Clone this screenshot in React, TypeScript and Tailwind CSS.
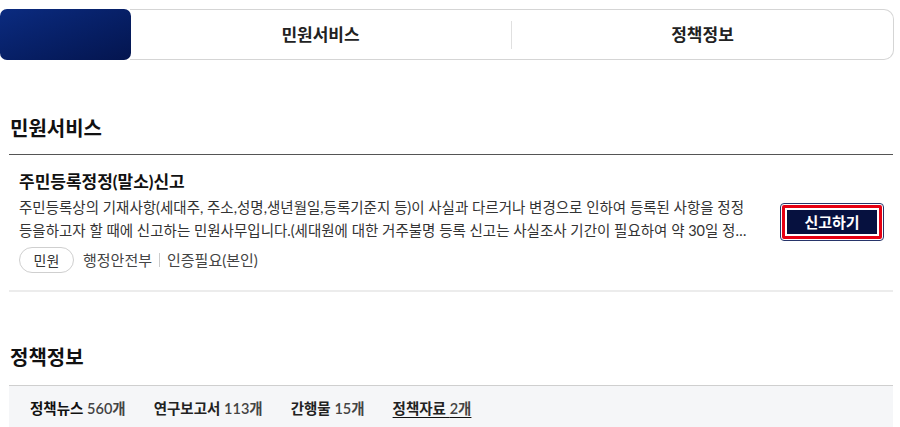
export default function App() {
  const counts = [
    { label: "정책뉴스", count: "560개", active: true },
    { label: "연구보고서", count: "113개" },
    { label: "간행물", count: "15개" },
    { label: "정책자료", count: "2개", underline: true },
  ];

  return (
    <div className="min-h-[427px] bg-white font-['Lato','Noto_Sans_CJK_KR',sans-serif] text-[#111]">
      {/* Tab bar */}
      <div className="pt-[9px] w-[894px] flex">
        <div className="w-[131px] h-[51px] rounded-[7px] bg-gradient-to-br from-[#0b2b80] to-[#04154f]" />
        <div className="flex-1 flex items-center h-[51px] border-y border-r border-[#d5d5d5] rounded-r-[10px] -ml-[1px]">
          <button className="flex-1 text-center text-[17px] font-bold text-[#222]">민원서비스</button>
          <span className="w-px h-[28px] bg-[#e0e0e0]" />
          <button className="flex-1 text-center text-[17px] font-bold text-[#222]">정책정보</button>
        </div>
      </div>

      <div className="ml-[9px] w-[884px]">
        {/* 민원서비스 */}
        <h2 className="mt-[54px] text-[20px] font-bold leading-[28px] pl-px">민원서비스</h2>
        <div className="mt-[12px] border-t border-[#555]">
          <div className="flex items-center border-b-2 border-[#ececec] pl-[10px] pr-[9px] pt-[15px] pb-[17px]">
            <div className="flex-1 min-w-0 pr-[30px]">
              <h3 className="text-[17px] font-bold leading-[24px]">주민등록정정(말소)신고</h3>
              <p className="mt-[2px] text-[14.5px] leading-[23px] text-[#333] line-clamp-2">
                주민등록상의 기재사항(세대주, 주소,성명,생년월일,등록기준지 등)이 사실과 다르거나 변경으로 인하여 등록된 사항을 정정
                등을하고자 할 때에 신고하는 민원사무입니다.(세대원에 대한 거주불명 등록 신고는 사실조사 기간이 필요하여 약 30일 정도 소요될 수 있습니다.)
              </p>
              <div className="mt-[5px] flex items-center text-[15px] text-[#444]">
                <span className="inline-flex items-center justify-center w-[55px] h-[26px] rounded-full border border-[#cfcfcf] text-[14px] text-[#333]">
                  민원
                </span>
                <span className="ml-[9px]">행정안전부</span>
                <span className="mx-[7px] w-px h-[14px] bg-[#ccc]" />
                <span>인증필요(본인)</span>
              </div>
            </div>
            <div className="rounded-[4px] border border-[#27356a] p-[1px]">
              <button className="block rounded-[2px] border-[3px] border-[#e60012] p-[2px] bg-white">
                <span className="block w-[90px] h-[24px] leading-[24px] bg-[#06113f] text-white text-[15px] font-bold text-center">
                  신고하기
                </span>
              </button>
            </div>
          </div>
        </div>

        {/* 정책정보 */}
        <h2 className="mt-[51px] text-[20px] font-bold leading-[28px] pl-px">정책정보</h2>
        <div className="mt-[14px] border-t border-[#cfcfcf] bg-[#f5f6f8] h-[46px] flex items-center gap-[28px] pl-[21px] text-[14.5px]">
          {counts.map((c) => (
            <span key={c.label} className={c.underline ? "underline underline-offset-[3px]" : ""}>
              <span className={c.active ? "font-bold text-[#111]" : "font-semibold text-[#222]"}>{c.label}</span>{" "}
              <span className="text-[#444] font-semibold">{c.count}</span>
            </span>
          ))}
        </div>
      </div>
    </div>
  );
}
